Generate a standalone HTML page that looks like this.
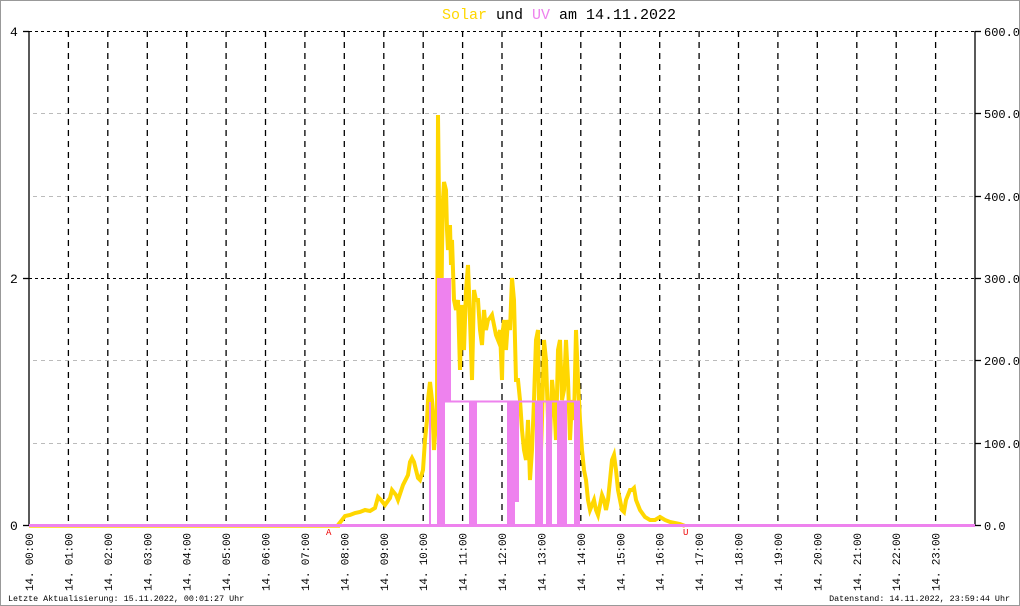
<!DOCTYPE html>
<html><head><meta charset="utf-8"><style>
html,body{margin:0;padding:0;background:#fff}
svg{display:block}
text{font-family:"Liberation Mono","DejaVu Sans Mono",monospace}
</style></head><body>
<svg width="1020" height="606" viewBox="0 0 1020 606" xmlns="http://www.w3.org/2000/svg">
<rect x="0.5" y="0.5" width="1019" height="605" fill="#fff" stroke="#999"/>
<text x="559" y="19" font-size="15" text-anchor="middle"><tspan fill="#FFD700">Solar</tspan> und <tspan fill="#EE82EE">UV</tspan> am 14.11.2022</text>
<g stroke="#bbb" stroke-dasharray="4,4" stroke-width="1">
<line x1="33" y1="113.5" x2="975" y2="113.5"/><line x1="33" y1="196.5" x2="975" y2="196.5"/>
<line x1="33" y1="360.5" x2="975" y2="360.5"/><line x1="33" y1="443.5" x2="975" y2="443.5"/>
</g>
<g stroke="#000" stroke-dasharray="3,3" stroke-width="1">
<line x1="29" y1="31.5" x2="975" y2="31.5"/><line x1="29" y1="278.5" x2="975" y2="278.5"/>
</g>
<g stroke="#000" stroke-dasharray="6,5" stroke-width="1.3">
<line x1="68.4" y1="31" x2="68.4" y2="525"/><line x1="107.8" y1="31" x2="107.8" y2="525"/><line x1="147.3" y1="31" x2="147.3" y2="525"/><line x1="186.7" y1="31" x2="186.7" y2="525"/><line x1="226.1" y1="31" x2="226.1" y2="525"/><line x1="265.5" y1="31" x2="265.5" y2="525"/><line x1="304.9" y1="31" x2="304.9" y2="525"/><line x1="344.3" y1="31" x2="344.3" y2="525"/><line x1="383.8" y1="31" x2="383.8" y2="525"/><line x1="423.2" y1="31" x2="423.2" y2="525"/><line x1="462.6" y1="31" x2="462.6" y2="525"/><line x1="502" y1="31" x2="502" y2="525"/><line x1="541.4" y1="31" x2="541.4" y2="525"/><line x1="580.8" y1="31" x2="580.8" y2="525"/><line x1="620.3" y1="31" x2="620.3" y2="525"/><line x1="659.7" y1="31" x2="659.7" y2="525"/><line x1="699.1" y1="31" x2="699.1" y2="525"/><line x1="738.5" y1="31" x2="738.5" y2="525"/><line x1="777.9" y1="31" x2="777.9" y2="525"/><line x1="817.3" y1="31" x2="817.3" y2="525"/><line x1="856.8" y1="31" x2="856.8" y2="525"/><line x1="896.2" y1="31" x2="896.2" y2="525"/><line x1="935.6" y1="31" x2="935.6" y2="525"/>
</g>
<g stroke="#000" stroke-width="1.3">
<line x1="29" y1="31" x2="29" y2="526"/><line x1="975" y1="31" x2="975" y2="526"/>
<line x1="23" y1="31.5" x2="29" y2="31.5"/><line x1="23" y1="278.5" x2="29" y2="278.5"/><line x1="23" y1="525.5" x2="29" y2="525.5"/>
<line x1="975" y1="31.5" x2="981" y2="31.5"/><line x1="975" y1="113.5" x2="981" y2="113.5"/><line x1="975" y1="196.5" x2="981" y2="196.5"/><line x1="975" y1="278.5" x2="981" y2="278.5"/><line x1="975" y1="360.5" x2="981" y2="360.5"/><line x1="975" y1="443.5" x2="981" y2="443.5"/><line x1="975" y1="525.5" x2="981" y2="525.5"/>
</g>
<g font-size="13" fill="#000">
<text x="10" y="36">4</text><text x="10" y="283">2</text><text x="10" y="530">0</text>
</g>
<g font-size="12" fill="#000">
<text x="984" y="36">600.0</text><text x="984" y="118">500.0</text><text x="984" y="201">400.0</text><text x="984" y="283">300.0</text><text x="984" y="365">200.0</text><text x="984" y="448">100.0</text><text x="984" y="530">0.0</text>
</g>
<line x1="29" y1="527" x2="340" y2="527" stroke="#FFD700" stroke-width="1.5"/>
<polyline fill="none" stroke="#FFD700" stroke-width="4" stroke-linejoin="miter" points="338,525 342,520 345,516 350,515 355,513 360,512 365,510 370,511 375,508 378,497 381,500 385,505 390,498 392,490 396,495 398,500 403,485 408,475 410,462 412,458 414,462 416,470 418,478 420,480 423,470 425,440 427,420 428,400 430,382 432,400 434,450 436,420 437,400 438,115 439,200 440,300 441,350 442,250 443,200 444,182 446,190 447,230 448,250 450,225 451,265 452,240 454,300 456,310 458,300 460,370 461,330 462,305 464,350 466,290 468,265 470,320 472,380 474,290 476,300 478,300 480,330 482,345 484,310 486,330 488,320 490,318 492,315 494,325 496,335 498,340 500,330 502,380 503,330 504,320 506,350 508,320 510,330 512,278 514,300 516,380 518,380 520,400 522,430 524,450 526,460 528,420 530,480 532,450 534,400 536,340 538,330 540,480 542,420 544,340 546,360 548,420 550,440 552,380 554,400 556,440 558,350 560,340 562,400 564,390 566,340 568,380 570,440 572,400 574,420 576,330 578,380 580,420 582,450 584,470 586,480 588,500 590,510 592,505 594,500 596,510 598,515 600,505 602,495 604,500 606,510 608,500 610,480 612,460 614,455 616,470 618,490 620,500 622,510 624,512 626,500 628,495 630,490 632,490 634,488 636,500 638,505 640,510 645,517 650,520 655,520 660,517 665,520 670,522 680,524 685,526"/>
<g fill="#EE82EE">
<rect x="29" y="524" width="946" height="3"/>
<rect x="429" y="402" width="2" height="123"/>
<rect x="437" y="278" width="8" height="247"/>
<rect x="443" y="278" width="8" height="124"/>
<rect x="469" y="402" width="8" height="123"/>
<rect x="507" y="402" width="8" height="123"/>
<rect x="515" y="402" width="4" height="100"/>
<rect x="535" y="402" width="6" height="123"/>
<rect x="541" y="402" width="2" height="123"/>
<rect x="546" y="402" width="6" height="123"/>
<rect x="557" y="402" width="10" height="123"/>
<rect x="574" y="402" width="6" height="123"/>
</g>
<line x1="445" y1="401.5" x2="580" y2="401.5" stroke="#EE82EE" stroke-width="2"/>
<text x="326" y="535" font-size="9" fill="#e00">A</text>
<text x="683" y="535" font-size="9" fill="#e00">U</text>
<g font-size="11" fill="#000">
<text transform="translate(33,533) rotate(-90)" text-anchor="end" textLength="58" lengthAdjust="spacing">14. 00:00</text>
<text transform="translate(72.4,533) rotate(-90)" text-anchor="end" textLength="58" lengthAdjust="spacing">14. 01:00</text>
<text transform="translate(111.8,533) rotate(-90)" text-anchor="end" textLength="58" lengthAdjust="spacing">14. 02:00</text>
<text transform="translate(151.3,533) rotate(-90)" text-anchor="end" textLength="58" lengthAdjust="spacing">14. 03:00</text>
<text transform="translate(190.7,533) rotate(-90)" text-anchor="end" textLength="58" lengthAdjust="spacing">14. 04:00</text>
<text transform="translate(230.1,533) rotate(-90)" text-anchor="end" textLength="58" lengthAdjust="spacing">14. 05:00</text>
<text transform="translate(269.5,533) rotate(-90)" text-anchor="end" textLength="58" lengthAdjust="spacing">14. 06:00</text>
<text transform="translate(308.9,533) rotate(-90)" text-anchor="end" textLength="58" lengthAdjust="spacing">14. 07:00</text>
<text transform="translate(348.3,533) rotate(-90)" text-anchor="end" textLength="58" lengthAdjust="spacing">14. 08:00</text>
<text transform="translate(387.8,533) rotate(-90)" text-anchor="end" textLength="58" lengthAdjust="spacing">14. 09:00</text>
<text transform="translate(427.2,533) rotate(-90)" text-anchor="end" textLength="58" lengthAdjust="spacing">14. 10:00</text>
<text transform="translate(466.6,533) rotate(-90)" text-anchor="end" textLength="58" lengthAdjust="spacing">14. 11:00</text>
<text transform="translate(506,533) rotate(-90)" text-anchor="end" textLength="58" lengthAdjust="spacing">14. 12:00</text>
<text transform="translate(545.4,533) rotate(-90)" text-anchor="end" textLength="58" lengthAdjust="spacing">14. 13:00</text>
<text transform="translate(584.8,533) rotate(-90)" text-anchor="end" textLength="58" lengthAdjust="spacing">14. 14:00</text>
<text transform="translate(624.3,533) rotate(-90)" text-anchor="end" textLength="58" lengthAdjust="spacing">14. 15:00</text>
<text transform="translate(663.7,533) rotate(-90)" text-anchor="end" textLength="58" lengthAdjust="spacing">14. 16:00</text>
<text transform="translate(703.1,533) rotate(-90)" text-anchor="end" textLength="58" lengthAdjust="spacing">14. 17:00</text>
<text transform="translate(742.5,533) rotate(-90)" text-anchor="end" textLength="58" lengthAdjust="spacing">14. 18:00</text>
<text transform="translate(781.9,533) rotate(-90)" text-anchor="end" textLength="58" lengthAdjust="spacing">14. 19:00</text>
<text transform="translate(821.3,533) rotate(-90)" text-anchor="end" textLength="58" lengthAdjust="spacing">14. 20:00</text>
<text transform="translate(860.8,533) rotate(-90)" text-anchor="end" textLength="58" lengthAdjust="spacing">14. 21:00</text>
<text transform="translate(900.2,533) rotate(-90)" text-anchor="end" textLength="58" lengthAdjust="spacing">14. 22:00</text>
<text transform="translate(939.6,533) rotate(-90)" text-anchor="end" textLength="58" lengthAdjust="spacing">14. 23:00</text>
</g>
<text x="8" y="601" font-size="8.4" fill="#000">Letzte Aktualisierung: 15.11.2022, 00:01:27 Uhr</text>
<text x="1010" y="601" font-size="8.4" fill="#000" text-anchor="end">Datenstand: 14.11.2022, 23:59:44 Uhr</text>
</svg>
</body></html>
